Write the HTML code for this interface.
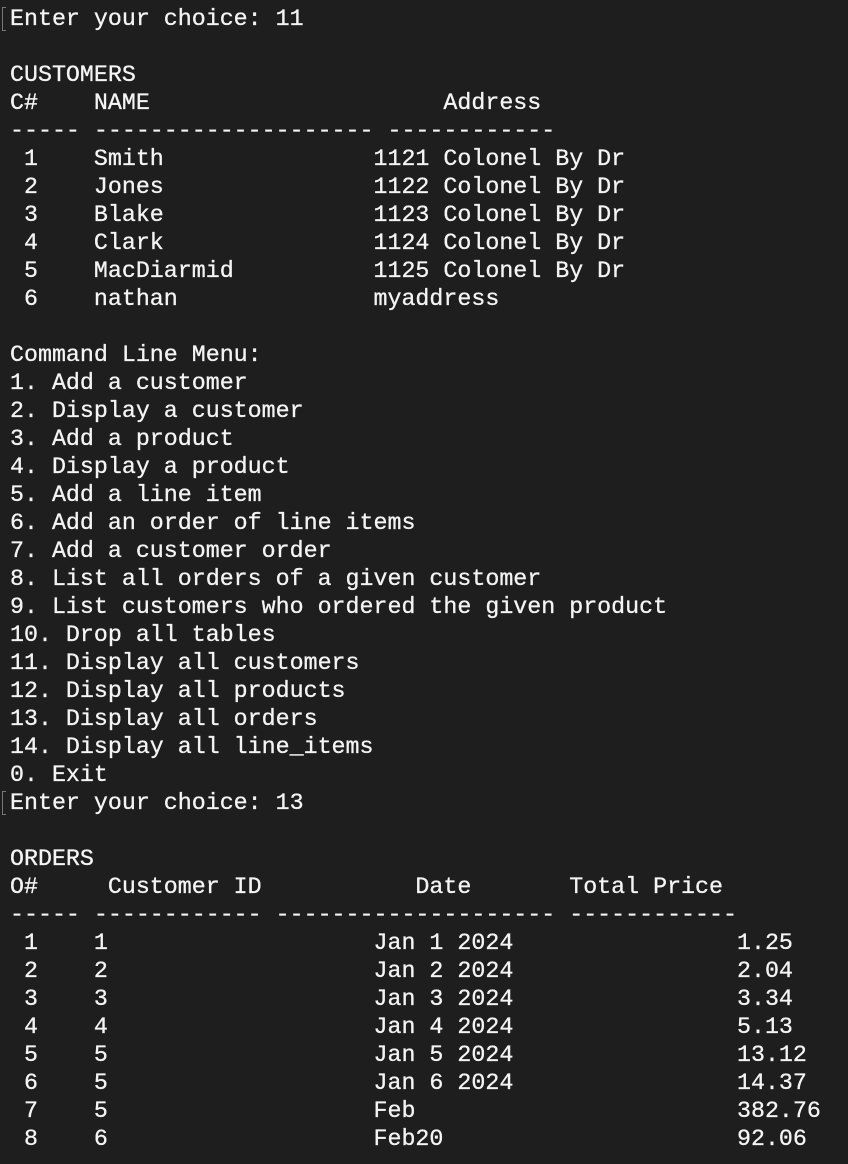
<!DOCTYPE html>
<html><head><meta charset="utf-8"><style>
html,body{margin:0;padding:0;background:#1e1e1e;width:848px;height:1164px;overflow:hidden}
pre{margin:0;position:absolute;left:10px;top:5px;font-family:"Liberation Mono",monospace;font-size:23.3px;line-height:28px;color:#f4f4f4;letter-spacing:0;-webkit-text-stroke:0.3px #f4f4f4}
.m{position:absolute;left:2px;width:3px;height:22px;border:1px solid #777;border-right:none}
</style></head><body>
<div class="m" style="top:7px"></div>
<div class="m" style="top:791px"></div>
<pre>Enter your choice: 11

CUSTOMERS
C#    NAME                     Address
----- -------------------- ------------
 1    Smith               1121 Colonel By Dr
 2    Jones               1122 Colonel By Dr
 3    Blake               1123 Colonel By Dr
 4    Clark               1124 Colonel By Dr
 5    MacDiarmid          1125 Colonel By Dr
 6    nathan              myaddress

Command Line Menu:
1. Add a customer
2. Display a customer
3. Add a product
4. Display a product
5. Add a line item
6. Add an order of line items
7. Add a customer order
8. List all orders of a given customer
9. List customers who ordered the given product
10. Drop all tables
11. Display all customers
12. Display all products
13. Display all orders
14. Display all line_items
0. Exit
Enter your choice: 13

ORDERS
O#     Customer ID           Date       Total Price
----- ------------ -------------------- ------------
 1    1                   Jan 1 2024                1.25
 2    2                   Jan 2 2024                2.04
 3    3                   Jan 3 2024                3.34
 4    4                   Jan 4 2024                5.13
 5    5                   Jan 5 2024                13.12
 6    5                   Jan 6 2024                14.37
 7    5                   Feb                       382.76
 8    6                   Feb20                     92.06</pre>
</body></html>
